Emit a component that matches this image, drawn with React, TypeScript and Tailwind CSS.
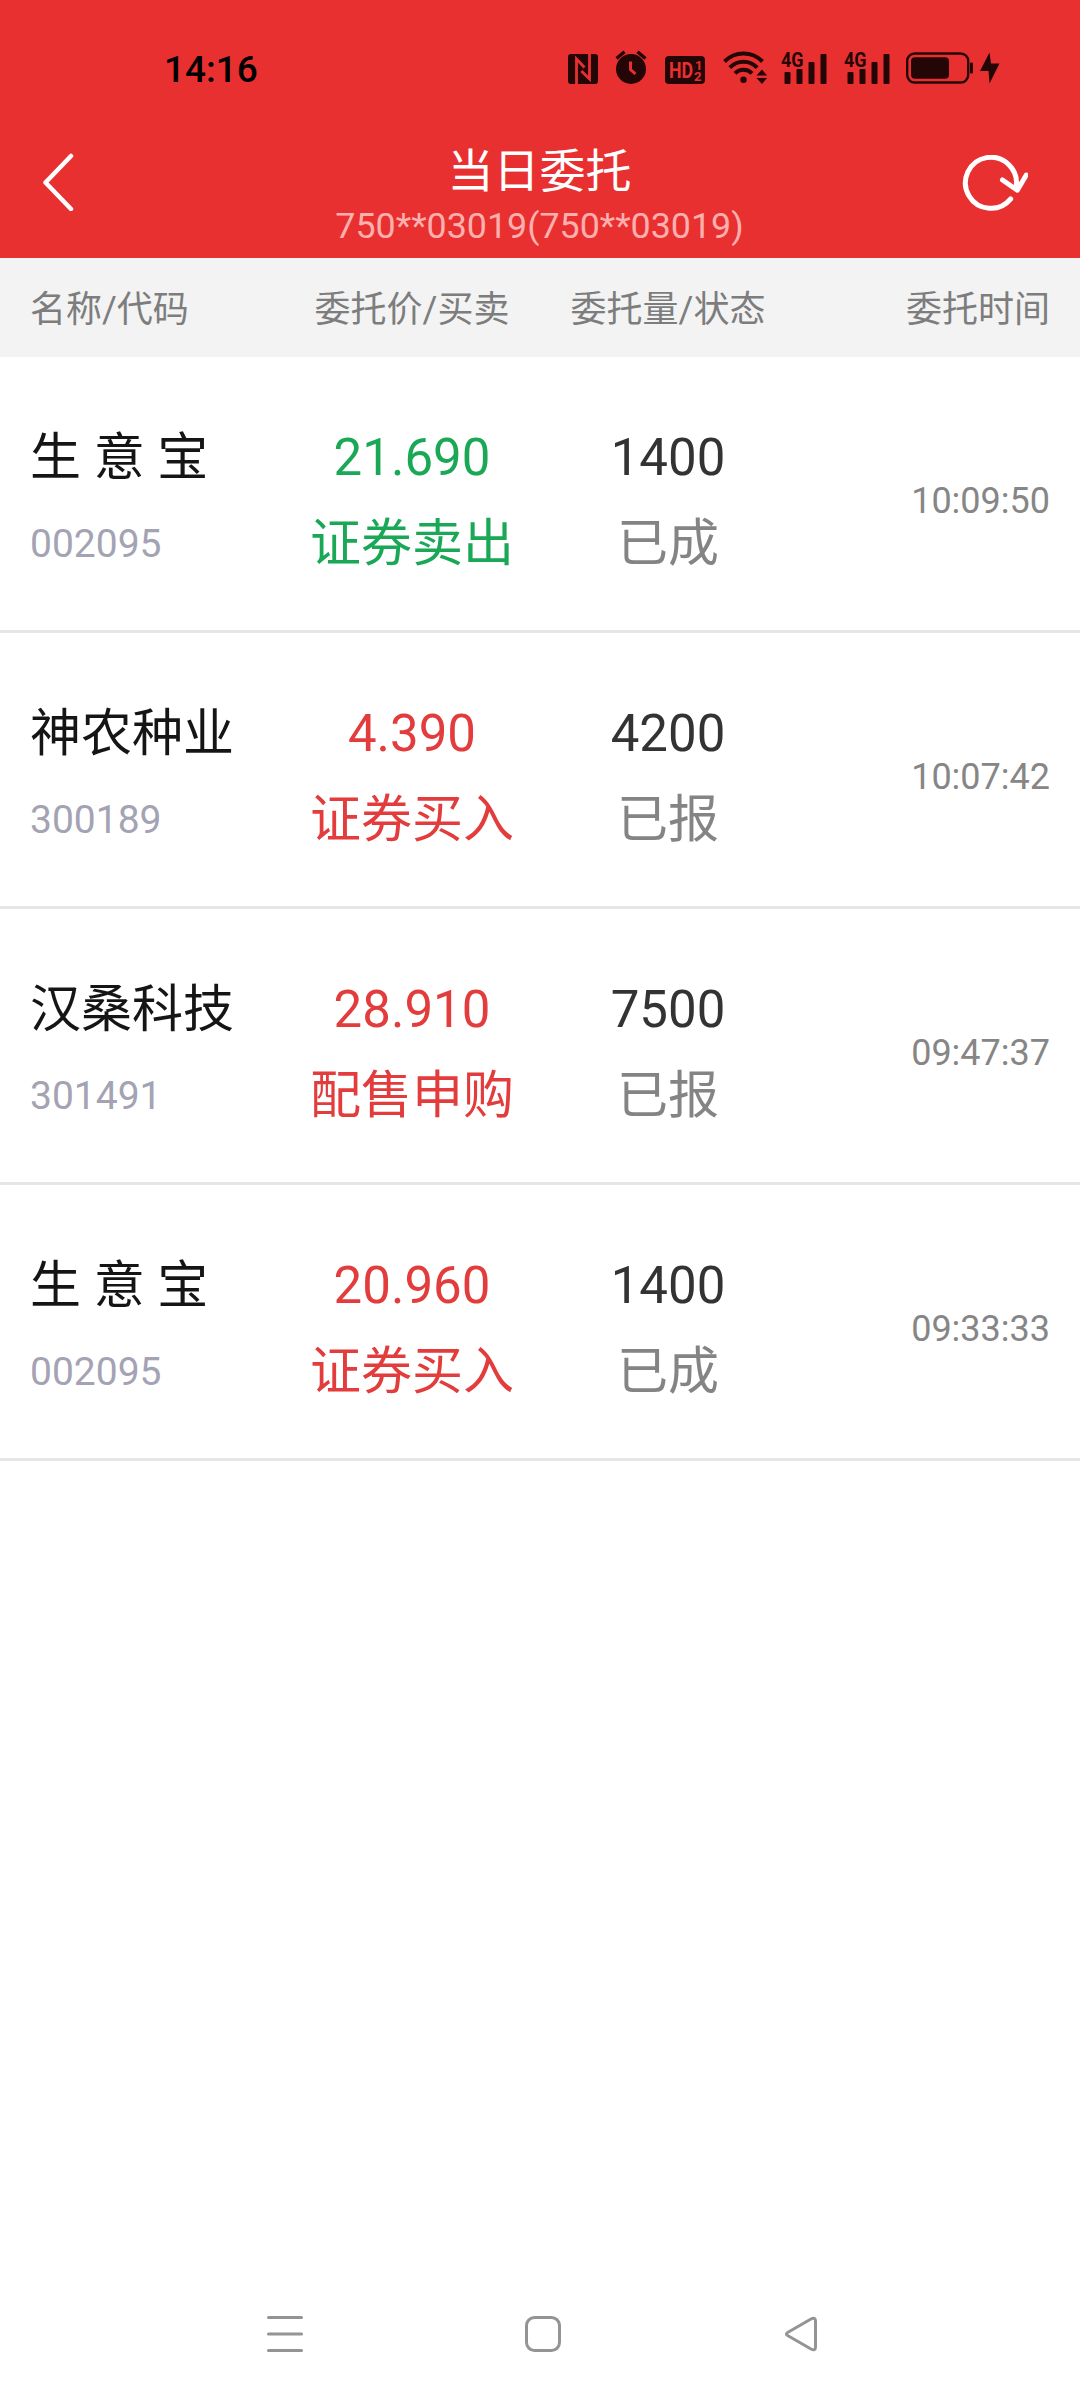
import React from 'react';

interface Order {
  name: string;
  code: string;
  price: string;
  action: string;
  side: 'buy' | 'sell';
  amount: string;
  status: string;
  time: string;
}

const ORDERS: Order[] = [
  { name: '生 意 宝', code: '002095', price: '21.690', action: '证券卖出', side: 'sell', amount: '1400', status: '已成', time: '10:09:50' },
  { name: '神农种业', code: '300189', price: '4.390', action: '证券买入', side: 'buy', amount: '4200', status: '已报', time: '10:07:42' },
  { name: '汉桑科技', code: '301491', price: '28.910', action: '配售申购', side: 'buy', amount: '7500', status: '已报', time: '09:47:37' },
  { name: '生 意 宝', code: '002095', price: '20.960', action: '证券买入', side: 'buy', amount: '1400', status: '已成', time: '09:33:33' },
];

const ICON = '#240606';
const RED = '#e83030';

const NfcIcon = () => (
  <svg width="30" height="30" viewBox="0 0 30 30">
    <rect width="30" height="30" rx="3" fill={ICON} />
    <path d="M8.5 30V5L16.5 13.5" fill="none" stroke={RED} strokeWidth="2.8" />
    <path d="M21.5 0V25L13.3 17" fill="none" stroke={RED} strokeWidth="2.8" />
  </svg>
);

const AlarmIcon = () => (
  <svg width="32" height="34" viewBox="0 0 32 34">
    <circle cx="16" cy="19" r="15" fill={ICON} />
    <path d="M1.5 8.5L9.5 1.8M30.5 8.5L22.5 1.8" stroke={ICON} strokeWidth="3.4" />
    <path d="M15.5 11.5V19.5L20.5 24" fill="none" stroke={RED} strokeWidth="3" />
  </svg>
);

const HdIcon = () => (
  <svg width="40" height="28" viewBox="0 0 40 28">
    <rect width="40" height="28" rx="4" fill={ICON} />
    <g fill={RED} fontFamily="Roboto, sans-serif" fontWeight="700">
      <text x="4" y="21.5" fontSize="21.5" textLength="24" lengthAdjust="spacingAndGlyphs">HD</text>
      <text x="30" y="13.5" fontSize="13">1</text>
      <text x="29" y="24.5" fontSize="13">2</text>
    </g>
  </svg>
);

const WifiIcon = () => (
  <svg width="44" height="34" viewBox="0 0 44 34">
    <g fill="none" stroke={ICON} strokeWidth="4">
      <path d="M1.5 11.5A26.5 26.5 0 0 1 39.5 11.5" />
      <path d="M6.8 17.6A18.8 18.8 0 0 1 34.2 17.6" />
      <path d="M12 23.4A11.6 11.6 0 0 1 29 23.4" />
    </g>
    <circle cx="20.5" cy="29.7" r="3.2" fill={ICON} />
    <path d="M33.5 25.5L39 19.5L44 25.5ZM33.5 28L39 34L44 28Z" fill={ICON} />
  </svg>
);

const SignalIcon = () => (
  <svg width="46" height="40" viewBox="0 -6 46 40">
    <text x="0" y="17" fontSize="21" fontWeight="700" fontFamily="Roboto, sans-serif" fill={ICON} textLength="22.5" lengthAdjust="spacingAndGlyphs">4G</text>
    <g fill={ICON}>
      <rect x="3.5" y="22" width="6" height="12" rx="1" />
      <rect x="15.5" y="19" width="6" height="15" rx="1" />
      <rect x="27.5" y="12" width="6" height="22" rx="1" />
      <rect x="39.5" y="4" width="6" height="30" rx="1" />
    </g>
  </svg>
);

const BatteryIcon = () => (
  <svg width="67" height="32" viewBox="0 0 67 32">
    <rect x="1.2" y="1.5" width="61" height="29" rx="7.5" fill="none" stroke={ICON} strokeWidth="2.4" />
    <rect x="5" y="5.2" width="38" height="21.6" rx="4" fill={ICON} />
    <rect x="64" y="10.5" width="3" height="11" rx="1.2" fill={ICON} />
  </svg>
);

const BoltIcon = () => (
  <svg width="20" height="32" viewBox="0 0 20 32">
    <path d="M9.5 0.5L0 19H8.5L9.5 31.5L19.5 11.5H11Z" fill={ICON} />
  </svg>
);

const StatusBar = () => (
  <div className="flex h-[138px] items-end justify-between pr-20 pb-[54px] pl-[164px]">
    <span className="translate-y-[6px] text-[37px] leading-10 font-medium text-black">14:16</span>
    <div className="flex items-end">
      <NfcIcon />
      <div className="w-[17px]" />
      <AlarmIcon />
      <div className="w-[18px]" />
      <HdIcon />
      <div className="w-[18px]" />
      <WifiIcon />
      <div className="w-[14px]" />
      <SignalIcon />
      <div className="w-[17px]" />
      <SignalIcon />
      <div className="w-[16px]" />
      <BatteryIcon />
      <div className="w-[7px]" />
      <BoltIcon />
    </div>
  </div>
);

const TitleBar = () => (
  <div className="flex h-[120px] items-start justify-between pr-[52px] pl-[43px]">
    <svg className="mt-[15px]" width="75" height="58" viewBox="0 0 75 58">
      <path d="M28 3L2.5 29.5L28 56" fill="none" stroke="white" strokeWidth="4.5" strokeLinecap="round" strokeLinejoin="round" />
    </svg>
    <div className="flex flex-col items-center">
      <h1 className="mt-[5px] text-[46px] leading-[56px] text-white">当日委托</h1>
      <p className="text-[35.8px] leading-[54px] text-[#ffb0ae]">750**03019(750**03019)</p>
    </div>
    <svg className="mt-[17px]" width="67" height="58" viewBox="0 0 67 58">
      <g fill="none" stroke="white" strokeWidth="5" strokeLinecap="round" strokeLinejoin="round">
        <path d="M49.7 43.9A25.5 25.5 0 1 1 55 32.5" />
        <path d="M41.5 25L56.3 35.2L65.3 20" />
      </g>
    </svg>
  </div>
);

const COLS = 'grid grid-cols-[254px_256px_256px_1fr] px-[30px]';

const OrderRow: React.FC<{ order: Order }> = ({ order }) => {
  const color = order.side === 'sell' ? 'text-[#1aa857]' : 'text-[#e23c3c]';
  return (
    <div className={`${COLS} h-[276px] items-center border-b-3 border-[#e6e6e6] pt-[14px] leading-[86px]`}>
      <div className="flex flex-col pt-px whitespace-pre">
        <span className="text-[51px] text-[#151515]">{order.name}</span>
        <span className="text-[39px] text-[#a3a3b4]">{order.code}</span>
      </div>
      <div className={`flex flex-col items-center text-[51px] ${color}`}>
        <span>{order.price}</span>
        <span>{order.action}</span>
      </div>
      <div className="flex flex-col items-center text-[51px]">
        <span className="text-[#333333]">{order.amount}</span>
        <span className="text-[#848484]">{order.status}</span>
      </div>
      <span className="text-right text-[36px] text-[#868686]">{order.time}</span>
    </div>
  );
};

const NavBar = () => (
  <div className="mt-auto flex h-[132px] items-center justify-between pr-[259px] pl-[262px] text-[#949494]">
    <svg width="46" height="40" viewBox="0 0 46 40">
      <path d="M6.5 3.5H39.5M6.5 20H39.5M6.5 36.5H39.5" stroke="currentColor" strokeWidth="3" strokeLinecap="round" />
    </svg>
    <svg className="-translate-x-0.5" width="40" height="40" viewBox="0 0 40 40">
      <rect x="3.5" y="3.5" width="33" height="33" rx="8" fill="none" stroke="currentColor" strokeWidth="3" />
    </svg>
    <svg width="40" height="40" viewBox="0 0 40 40">
      <path d="M7 18.2L30 5Q34.5 2.8 34.5 7V33Q34.5 37.2 30 35L7 21.8Q3.8 20 7 18.2Z" fill="none" stroke="currentColor" strokeWidth="3" strokeLinejoin="round" />
    </svg>
  </div>
);

const App: React.FC = () => {
  return (
    <div className="flex h-[2400px] w-[1080px] flex-col overflow-hidden bg-white font-[Roboto,'Noto_Sans_CJK_SC',sans-serif]">
      <header className="h-[258px] bg-[#e83030]">
        <StatusBar />
        <TitleBar />
      </header>
      <div className={`${COLS} h-[99px] items-center bg-[#f3f3f3] pt-1 text-[36px] text-[#7d7d7d]`}>
        <span>名称/代码</span>
        <span className="text-center">委托价/买卖</span>
        <span className="text-center">委托量/状态</span>
        <span className="text-right">委托时间</span>
      </div>
      <main>
        {ORDERS.map((order) => (
          <OrderRow key={order.time} order={order} />
        ))}
      </main>
      <NavBar />
    </div>
  );
};

export default App;
